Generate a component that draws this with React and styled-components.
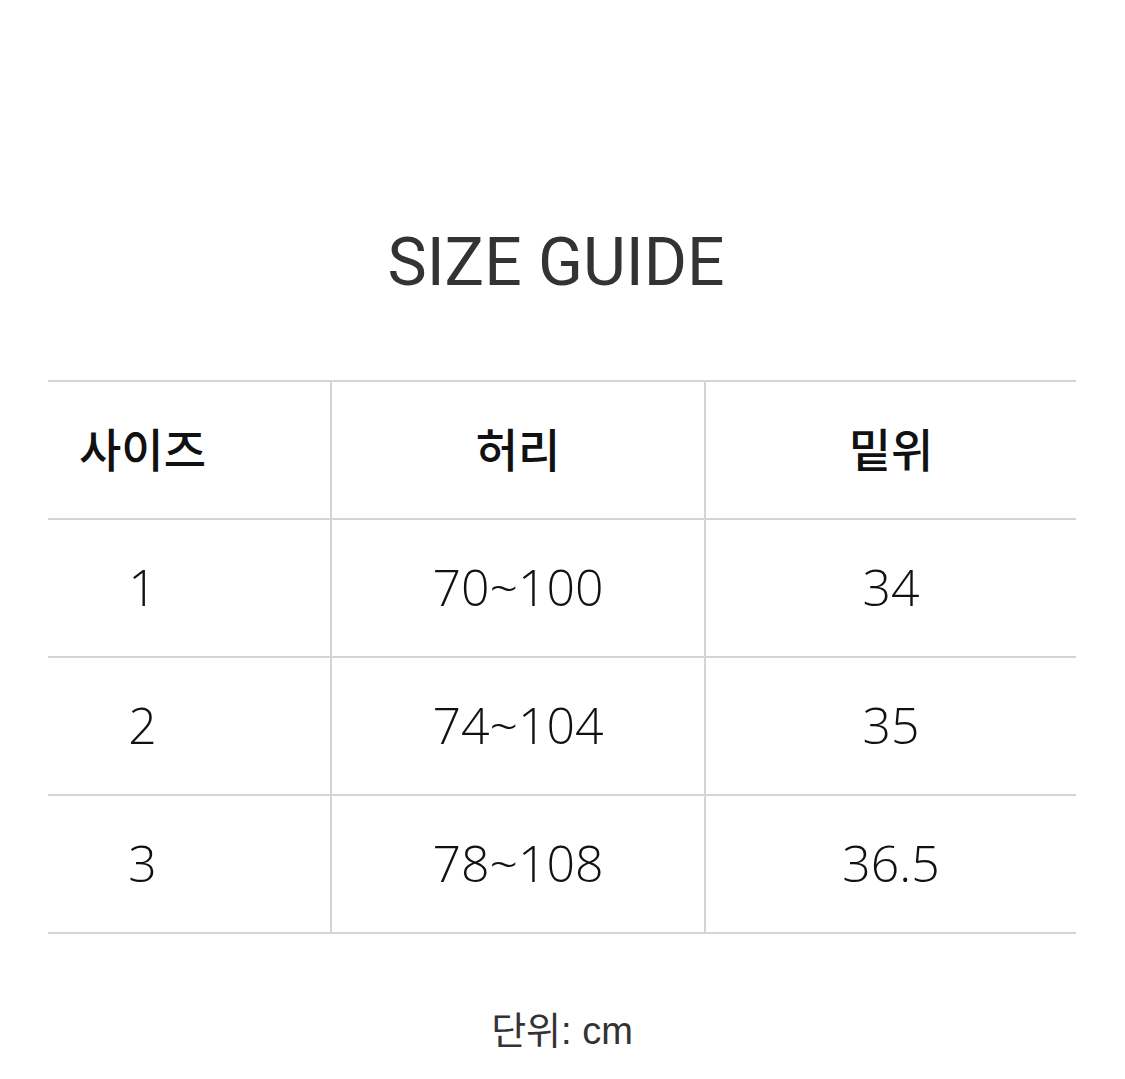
import React from 'react';
import styled, { createGlobalStyle } from 'styled-components';

const GlobalStyle = createGlobalStyle`
  html, body {
    margin: 0;
    padding: 0;
    background: #ffffff;
  }
  body {
    font-family: "Noto Sans CJK KR", "Noto Sans", sans-serif;
  }
`;

const rows = [
  { size: '1', waist: '70~100', rise: '34' },
  { size: '2', waist: '74~104', rise: '35' },
  { size: '3', waist: '78~108', rise: '36.5' },
];

const Page = styled.div`
  width: 1125px;
  box-sizing: border-box;
  padding: 230px 49px 0 48px;
  display: flex;
  flex-direction: column;
  align-items: center;
`;

const Title = styled.h1`
  margin: 0 12px 0 0;
  font-family: Roboto, "Liberation Sans", "Noto Sans CJK KR", sans-serif;
  font-weight: 400;
  font-size: 66px;
  line-height: 66px;
  color: #333333;
`;

const Table = styled.table`
  margin-top: 84px;
  width: 1028px;
  border-collapse: collapse;
  table-layout: fixed;
`;

const Col = styled.col`
  width: ${(p) => p.$w}px;
`;

const Cell = styled.td`
  height: 138px;
  box-sizing: border-box;
  padding: 0 ${(p) => (p.$first ? 93 : 0)}px ${(p) => (p.$head ? 6 : 2)}px 0;
  text-align: center;
  vertical-align: middle;
  border-top: 2px solid #d4d4d4;
  border-bottom: 2px solid #d4d4d4;
  border-left: ${(p) => (p.$first ? 'none' : '2px solid #d4d4d4')};
  color: #111111;
  font-family: ${(p) =>
    p.$head
      ? '"Noto Sans CJK KR", "Noto Sans", sans-serif'
      : '"Open Sans", "Noto Sans", "Noto Sans CJK KR", sans-serif'};
  font-size: ${(p) => (p.$head ? 46 : 50)}px;
  font-weight: ${(p) => (p.$head ? 500 : 300)};
  line-height: 1;
`;

const Unit = styled.p`
  margin: 78px 0 0;
  font-family: "Liberation Sans", Arial, "Noto Sans CJK KR", sans-serif;
  font-size: 38px;
  line-height: 1;
  color: #333333;
`;

export default function App() {
  return (
    <>
      <GlobalStyle />
      <Page>
        <Title>SIZE GUIDE</Title>
        <Table>
          <colgroup>
            <Col $w={283} />
            <Col $w={374} />
            <Col $w={371} />
          </colgroup>
          <tbody>
            <tr>
              <Cell $head $first>사이즈</Cell>
              <Cell $head>허리</Cell>
              <Cell $head>밑위</Cell>
            </tr>
            {rows.map((r) => (
              <tr key={r.size}>
                <Cell $first>{r.size}</Cell>
                <Cell>{r.waist}</Cell>
                <Cell>{r.rise}</Cell>
              </tr>
            ))}
          </tbody>
        </Table>
        <Unit>단위: cm</Unit>
      </Page>
    </>
  );
}
